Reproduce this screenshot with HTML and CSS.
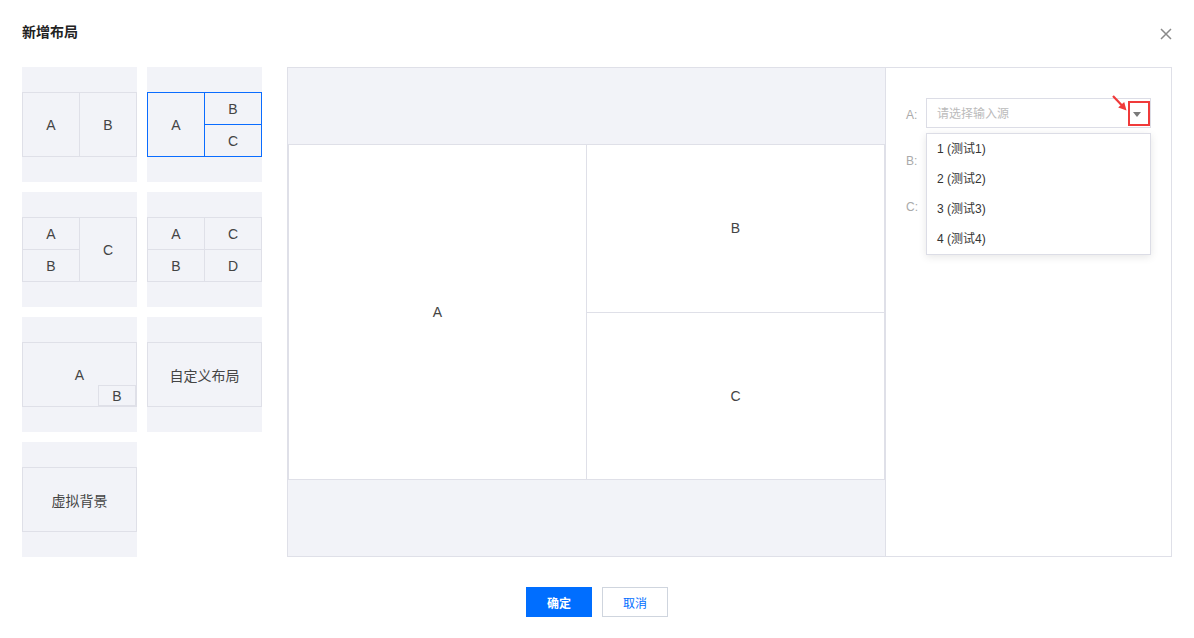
FILE: index.html
```html
<!DOCTYPE html>
<html lang="zh-CN">
<head>
<meta charset="utf-8">
<title>新增布局</title>
<link rel="stylesheet" href="styles.css">
</head>
<body>
<div class="dialog">
  <header class="head">
    <h1 class="title">新增布局</h1>
    <button class="close" type="button" aria-label="关闭">
      <svg width="12" height="12" viewBox="0 0 12 12"><path d="M1 1 L11 11 M11 1 L1 11" stroke="#8a8a8a" stroke-width="1.5" fill="none"/></svg>
    </button>
  </header>

  <main class="main">
    <div class="thumbs">
      <div class="tile"><div class="frame f-ab"><span>A</span><span>B</span></div></div>
      <div class="tile"><div class="frame f-abc selected"><span class="ga">A</span><span>B</span><span>C</span></div></div>
      <div class="tile"><div class="frame f-abc2"><span class="ga">A</span><span class="gb">B</span><span class="gc">C</span></div></div>
      <div class="tile"><div class="frame f-abcd"><span>A</span><span>C</span><span>B</span><span>D</span></div></div>
      <div class="tile"><div class="frame f-one pip"><span>A</span><em class="pip-b">B</em></div></div>
      <div class="tile"><div class="frame f-one"><span>自定义布局</span></div></div>
      <div class="tile"><div class="frame f-one"><span>虚拟背景</span></div></div>
    </div>

    <section class="panel">
      <div class="preview">
        <div class="canvas">
          <div class="cell ca">A</div>
          <div class="cell">B</div>
          <div class="cell">C</div>
        </div>
      </div>
      <aside class="form">
        <div class="row">
          <label class="lbl">A:</label>
          <div class="select">
            <span class="ph">请选择输入源</span>
            <i class="caret"></i>
            <span class="mark"></span>
            <svg class="pointer" width="18" height="20" viewBox="0 0 18 20"><line x1="3" y1="3" x2="12" y2="12.6" stroke="#f03a3a" stroke-width="2.2"/><polygon points="16.5,17.5 8.2,14.6 14.2,9" fill="#f03a3a"/></svg>
          </div>
        </div>
        <div class="row">
          <label class="lbl">B:</label>
          <div class="select"><span class="ph"></span><i class="caret"></i></div>
        </div>
        <div class="row">
          <label class="lbl">C:</label>
          <div class="select"><span class="ph"></span><i class="caret"></i></div>
        </div>
        <ul class="dropdown">
          <li>1 (测试1)</li>
          <li>2 (测试2)</li>
          <li>3 (测试3)</li>
          <li>4 (测试4)</li>
        </ul>
      </aside>
    </section>
  </main>

  <footer class="foot">
    <button class="btn primary" type="button">确定</button>
    <button class="btn" type="button">取消</button>
  </footer>
</div>
</body>
</html>
```

FILE: styles.css
```css
* { box-sizing: border-box; }

html, body {
  margin: 0;
  padding: 0;
  background: #fff;
}

body {
  font-family: "Liberation Sans", "Noto Sans CJK SC", sans-serif;
  color: #444;
}

.dialog {
  width: 1194px;
  height: 638px;
  padding: 0 22px;
}

.head {
  height: 67px;
  display: flex;
  align-items: center;
  justify-content: space-between;
}

.title {
  margin: 0 0 3px 0;
  font-size: 14px;
  font-weight: bold;
  color: #222;
  line-height: 20px;
}

.close {
  border: 0;
  background: none;
  padding: 0;
  width: 12px;
  height: 12px;
  display: flex;
}

.main {
  display: flex;
  gap: 25px;
  height: 490px;
}

.thumbs {
  display: grid;
  grid-template-columns: 115px 115px;
  grid-auto-rows: 115px;
  gap: 10px;
  width: 240px;
}

.tile {
  background: #f2f3f8;
  padding-top: 25px;
}

.frame {
  position: relative;
  height: 65px;
  border: 1px solid #dfe0e8;
  background: #dfe0e8;
  display: grid;
  gap: 1px;
  font-size: 14px;
  color: #444;
}

.frame span {
  background: #f2f3f8;
  display: flex;
  align-items: center;
  justify-content: center;
}

.frame.selected {
  border-color: #0a6cff;
  background: #0a6cff;
}

.f-ab { grid-template-columns: 1fr 1fr; }

.f-abc {
  grid-template-columns: 1fr 1fr;
  grid-template-rows: 1fr 1fr;
}
.f-abc .ga { grid-row: 1 / 3; }

.f-abc2 {
  grid-template-columns: 1fr 1fr;
  grid-template-rows: 1fr 1fr;
  grid-template-areas: "a c" "b c";
}
.f-abc2 .ga { grid-area: a; }
.f-abc2 .gb { grid-area: b; }
.f-abc2 .gc { grid-area: c; }

.f-abcd {
  grid-template-columns: 1fr 1fr;
  grid-template-rows: 1fr 1fr;
}

.f-one { grid-template-columns: 1fr; }

.pip-b {
  position: absolute;
  right: 0;
  bottom: 0;
  width: 38px;
  height: 21px;
  border: 1px solid #dfe0e8;
  background: #f2f3f8;
  font-style: normal;
  font-size: 14px;
  display: flex;
  align-items: center;
  justify-content: center;
}

.panel {
  width: 885px;
  height: 490px;
  border: 1px solid #dfe0e8;
  display: flex;
}

.preview {
  width: 597px;
  background: #f2f3f8;
  padding-top: 76px;
}

.canvas {
  width: 597px;
  height: 336px;
  border: 1px solid #dfe0e8;
  background: #dfe0e8;
  display: grid;
  grid-template-columns: 1fr 1fr;
  grid-template-rows: 1fr 1fr;
  gap: 1px;
}

.cell {
  background: #fff;
  display: flex;
  align-items: center;
  justify-content: center;
  font-size: 14px;
  color: #444;
}

.ca { grid-row: 1 / 3; }

.form {
  position: relative;
  flex: 1;
  border-left: 1px solid #dfe0e8;
  padding: 30px 20px 0 20px;
  background: #fff;
}

.row {
  display: flex;
  height: 30px;
  margin-bottom: 16px;
}

.lbl {
  width: 20px;
  font-size: 12px;
  color: #aaa;
  padding-top: 5px;
  line-height: 24px;
}

.select {
  position: relative;
  width: 225px;
  height: 30px;
  border: 1px solid #dcdde6;
  display: flex;
  align-items: center;
  padding: 0 9px 0 10px;
  background: #fff;
}

.ph {
  flex: 1;
  font-size: 12px;
  color: #bbb;
  margin-top: -2px;
}

.caret {
  width: 0;
  height: 0;
  border-left: 4px solid transparent;
  border-right: 4px solid transparent;
  border-top: 5px solid #7a7a7a;
  margin-top: 3px;
}

.mark {
  position: absolute;
  right: 0;
  top: 2px;
  width: 22px;
  height: 25px;
  border: 2px solid #f03a3a;
}

.pointer {
  position: absolute;
  left: 183px;
  top: -6px;
}

.dropdown {
  position: absolute;
  left: 40px;
  top: 65px;
  width: 225px;
  margin: 0;
  padding: 0;
  list-style: none;
  background: #fff;
  border: 1px solid #dcdde6;
  box-shadow: 0 2px 8px rgba(0, 0, 0, 0.1);
}

.dropdown li {
  height: 30px;
  line-height: 30px;
  padding: 0 10px;
  font-size: 12px;
  color: #333;
}

.foot {
  display: flex;
  justify-content: center;
  gap: 10px;
  padding-top: 30px;
}

.btn {
  width: 66px;
  height: 30px;
  font-family: "Liberation Sans", "Noto Sans CJK SC", sans-serif;
  font-size: 12px;
  border: 1px solid #cfd5de;
  background: #fff;
  color: #006eff;
  padding: 0;
}

.btn.primary {
  background: #006eff;
  border-color: #006eff;
  color: #fff;
  font-weight: bold;
}
```
